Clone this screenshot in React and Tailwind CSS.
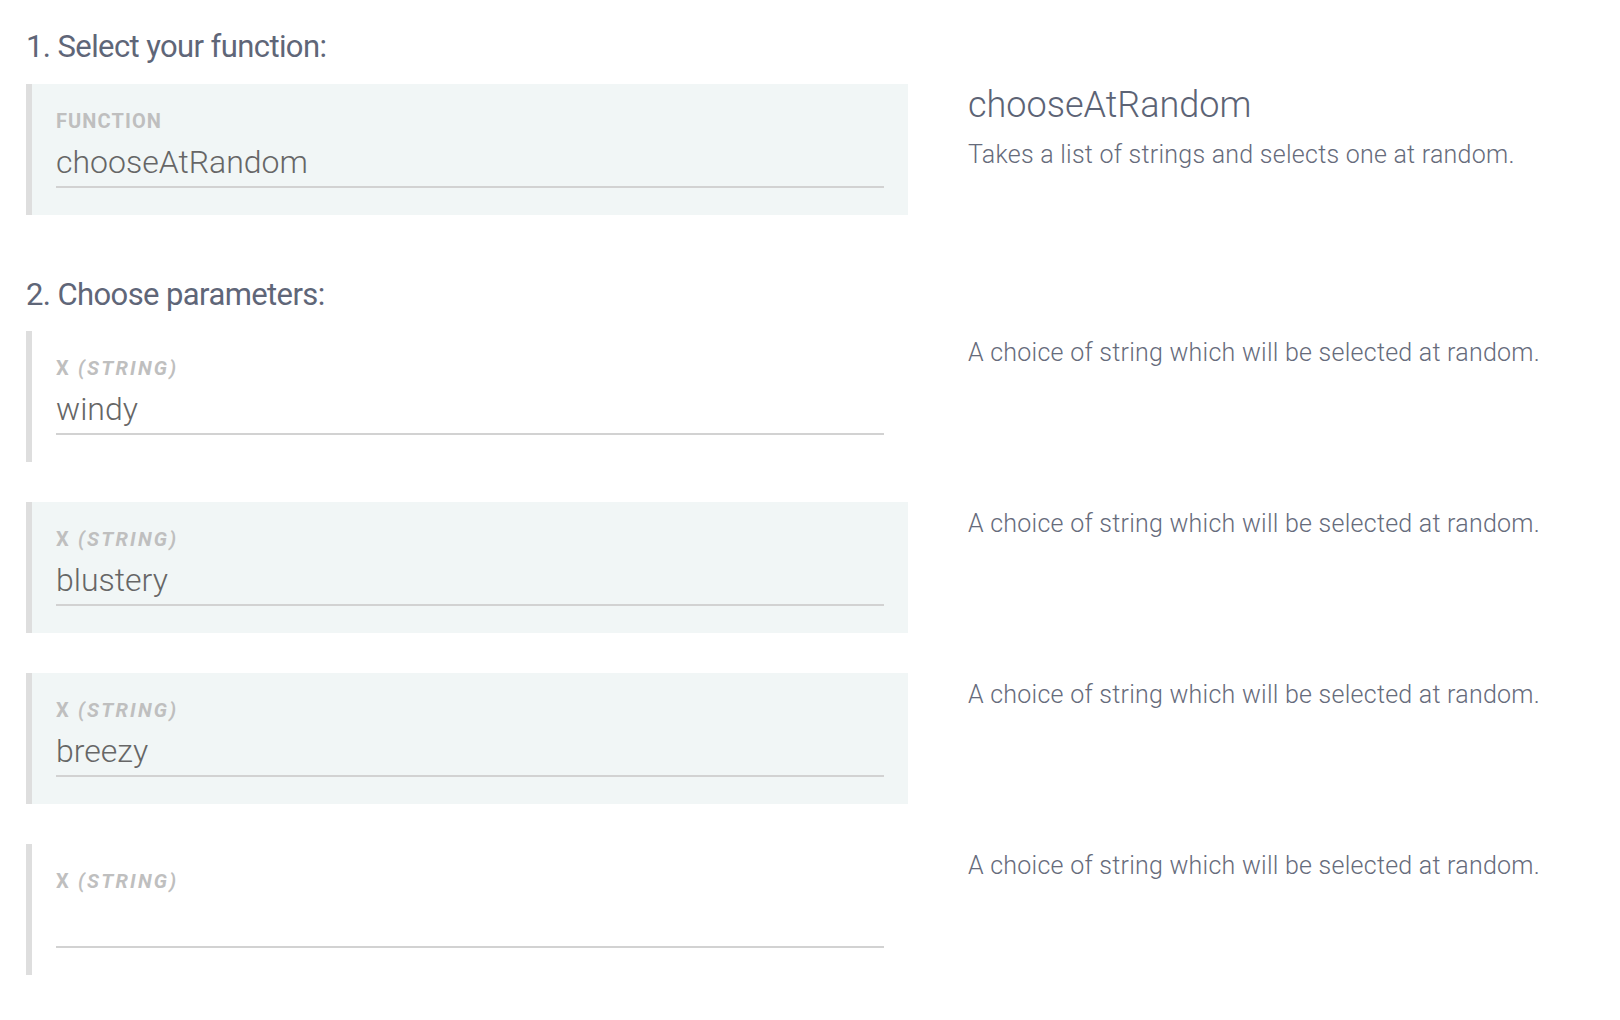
import React from 'react';

const params = [
  { value: 'windy', shaded: false },
  { value: 'blustery', shaded: true },
  { value: 'breezy', shaded: true },
  { value: '', shaded: false },
];

function Field({ label, value, shaded, labelClass }) {
  return (
    <div
      className={`w-[882px] h-[131px] border-l-[6px] border-[#dedede] pl-[24px] pr-[24px] pt-[25px] ${
        shaded ? 'bg-[#f1f6f6]' : 'bg-white'
      }`}
    >
      <div className={`text-[20px] leading-[24px] font-bold text-[#bfbfbf] ${labelClass}`}>{label}</div>
      <div className="mt-[9px] h-[46px] border-b-2 border-[#d2d2d2] pb-1 text-[32px] leading-[40px] font-light text-[#666]">
        {value}
      </div>
    </div>
  );
}

const paramLabel = (
  <>
    X <span className="italic">(STRING)</span>
  </>
);

export default function App() {
  return (
    <div className="min-h-screen bg-white pl-[26px] pt-[28px]" style={{ fontFamily: 'Roboto, "Noto Sans", sans-serif' }}>
      <h2 className="text-[31px] leading-[38px] font-normal tracking-[-0.6px] text-[#5f6678]">1. Select your function:</h2>

      <div className="mt-[18px] flex gap-[60px]">
        <Field label="FUNCTION" value="chooseAtRandom" shaded labelClass="tracking-[1.1px]" />
        <div className="-mt-[1px]">
          <div className="text-[36px] leading-[44px] font-light text-[#5c6375]">chooseAtRandom</div>
          <p className="mt-[12px] text-[25px] leading-[32px] font-light tracking-[0.25px] text-[#666b7b]">
            Takes a list of strings and selects one at random.
          </p>
        </div>
      </div>

      <h2 className="mt-[61px] text-[31px] leading-[38px] font-normal tracking-[-0.6px] text-[#5f6678]">2. Choose parameters:</h2>

      <div className="mt-[17px] flex flex-col gap-[40px]">
        {params.map((p, i) => (
          <div key={i} className="flex gap-[60px]">
            <Field label={paramLabel} value={p.value} shaded={p.shaded} labelClass="tracking-[2.2px]" />
            <p className="mt-[6px] text-[25px] leading-[32px] font-light tracking-[0.25px] text-[#666b7b]">
              A choice of string which will be selected at random.
            </p>
          </div>
        ))}
      </div>
    </div>
  );
}
